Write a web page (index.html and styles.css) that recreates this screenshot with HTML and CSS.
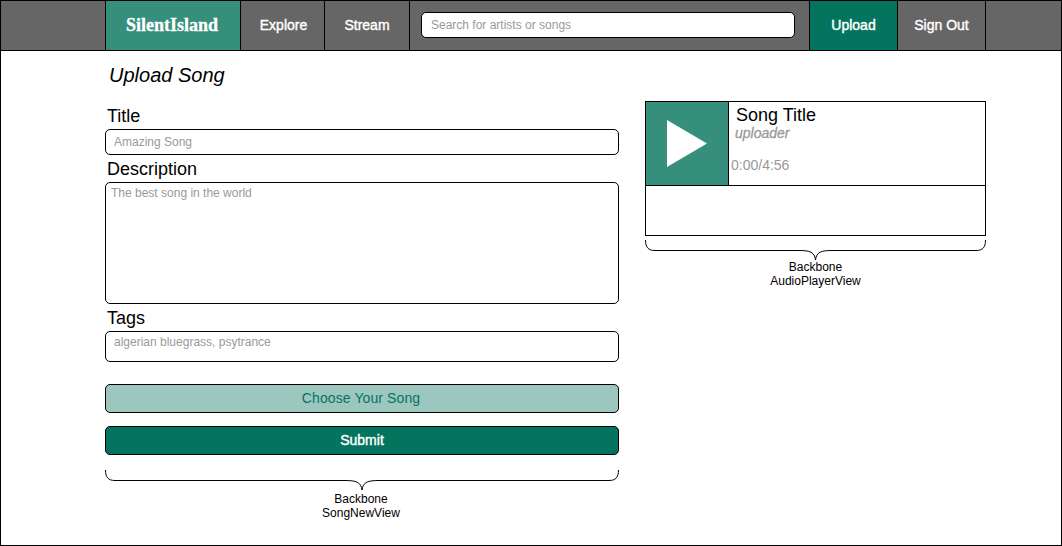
FILE: index.html
```html
<!DOCTYPE html>
<html lang="en">
<head>
    <meta charset="UTF-8">
    <meta name="viewport" content="width=device-width, initial-scale=1.0">
    <title>Upload Song</title>
    <link rel="stylesheet" href="styles.css">
</head>
<body>
    <div class="page">
        <header class="nav">
            <a class="nav-logo">SilentIsland</a>
            <a class="nav-link nav-explore">Explore</a>
            <a class="nav-link nav-stream">Stream</a>
            <div class="nav-search">
                <input class="search-input" type="text" placeholder="Search for artists or songs">
            </div>
            <a class="nav-link nav-upload">Upload</a>
            <a class="nav-link nav-signout">Sign Out</a>
        </header>

        <main class="content">
            <section class="song-new">
                <h1 class="page-title">Upload Song</h1>
                <form class="song-form">
                    <label class="field-label" for="title">Title</label>
                    <input class="field field-title" id="title" type="text" placeholder="Amazing Song">
                    <label class="field-label" for="description">Description</label>
                    <textarea class="field field-description" id="description" placeholder="The best song in the world"></textarea>
                    <label class="field-label" for="tags">Tags</label>
                    <textarea class="field field-tags" id="tags" placeholder="algerian bluegrass, psytrance"></textarea>
                    <button class="btn btn-choose" type="button">Choose Your Song</button>
                    <button class="btn btn-submit" type="button">Submit</button>
                </form>
                <svg class="brace brace-form" width="514" height="20" viewBox="0 0 514 20">
                    <path d="M0.5 0 C0.5 7 3 10.5 10 10.5 L240 10.5 C251 10.5 256 12 257 20 C258 12 263 10.5 274 10.5 L504 10.5 C511 10.5 513.5 7 513.5 0" fill="none" stroke="#000" stroke-width="1"/>
                </svg>
                <p class="note note-form">Backbone<br>SongNewView</p>
            </section>

            <aside class="player-col">
                <div class="player">
                    <div class="player-top">
                        <div class="play-box">
                            <svg width="40" height="47" viewBox="0 0 40 47">
                                <polygon points="0,0 40,23.5 0,47" fill="#fff"/>
                            </svg>
                        </div>
                        <div class="song-info">
                            <div class="song-title">Song Title</div>
                            <div class="song-uploader">uploader</div>
                            <div class="song-time">0:00/4:56</div>
                        </div>
                    </div>
                    <div class="player-bottom"></div>
                </div>
                <svg class="brace brace-player" width="341" height="20" viewBox="0 0 341 20">
                    <path d="M0.5 0 C0.5 7 3 10.5 10 10.5 L154 10.5 C165 10.5 169.5 12 170.5 20 C171.5 12 176 10.5 187 10.5 L331 10.5 C338 10.5 340.5 7 340.5 0" fill="none" stroke="#000" stroke-width="1"/>
                </svg>
                <p class="note">Backbone<br>AudioPlayerView</p>
            </aside>
        </main>
    </div>
</body>
</html>
```

FILE: styles.css
```css
* {
    box-sizing: border-box;
}

body {
    margin: 0;
    font-family: "Liberation Sans", Arial, sans-serif;
    background-color: #fff;
    color: #000;
}

.page {
    width: 1062px;
    height: 546px;
    border: 1px solid #000;
    overflow: hidden;
}

/* top bar */
.nav {
    display: flex;
    height: 50px;
    padding-left: 104px;
    background-color: #666;
    border-bottom: 1px solid #000;
}

.nav-logo,
.nav-link {
    display: flex;
    align-items: center;
    justify-content: center;
    border-left: 1px solid #000;
    color: #fff;
}

.nav-logo {
    width: 135px;
    padding: 0 2px 1px 0;
    background-color: #358f7c;
    font-family: "Liberation Serif", serif;
    font-size: 18px;
    font-weight: bold;
    -webkit-text-stroke: 0.3px #fff;
}

.nav-link {
    padding-bottom: 2px;
    font-size: 14px;
    -webkit-text-stroke: 0.4px #fff;
}

.nav-explore {
    width: 84px;
    padding-left: 2px;
}

.nav-stream {
    width: 85px;
}

.nav-search {
    display: flex;
    align-items: center;
    width: 400px;
    padding: 0 14px 1px 11px;
    border-left: 1px solid #000;
}

.search-input {
    width: 100%;
    height: 26px;
    padding: 0 9px;
    border: 1px solid #000;
    border-radius: 5px;
    font-family: inherit;
    font-size: 12px;
}

.nav-upload {
    width: 88px;
    background-color: #04745f;
}

.nav-signout {
    width: 89px;
    border-right: 1px solid #000;
}

/* main area */
.content {
    display: flex;
    gap: 26px;
    padding-left: 104px;
}

.song-new {
    width: 514px;
}

.page-title {
    margin: 0;
    padding: 12px 0 0 4px;
    height: 51px;
    font-size: 20px;
    font-weight: normal;
    font-style: italic;
    line-height: 25px;
}

.song-form {
    display: flex;
    flex-direction: column;
}

.field-label {
    height: 27px;
    padding: 4px 0 0 2px;
    font-size: 18px;
    line-height: 20px;
}

.field {
    display: block;
    width: 100%;
    border: 1px solid #000;
    border-radius: 5px;
    font-family: inherit;
    font-size: 12px;
    resize: none;
    outline: none;
}

.field::placeholder,
.search-input::placeholder {
    color: #999;
    opacity: 1;
}

.field-title {
    height: 26px;
    padding: 0 8px;
}

.field-description {
    height: 122px;
    padding: 3px 5px;
}

.field-tags {
    height: 31px;
    padding: 3px 8px;
}

.btn {
    display: block;
    width: 100%;
    height: 29px;
    padding-bottom: 3px;
    border: 1px solid #000;
    border-radius: 5px;
    font-family: inherit;
    font-size: 14px;
}

.btn-choose {
    margin-top: 22px;
    padding-right: 8px;
    background-color: #9bc7be;
    color: #04745f;
    letter-spacing: 0.1px;
}

.btn-submit {
    margin-top: 13px;
    background-color: #04745f;
    color: #fff;
    -webkit-text-stroke: 0.4px #fff;
}

.brace {
    display: block;
}

.brace-form {
    margin-top: 15px;
}

.note {
    margin: 0;
    font-size: 12px;
    line-height: 14px;
    text-align: center;
}

.note-form {
    padding: 2px 2px 0 0;
}

/* audio player */
.player-col {
    width: 341px;
    padding-top: 50px;
}

.player {
    height: 135px;
    border: 1px solid #000;
}

.player-top {
    display: flex;
    height: 84px;
    border-bottom: 1px solid #000;
}

.play-box {
    display: flex;
    align-items: center;
    width: 83px;
    padding-left: 21px;
    background-color: #358f7c;
    border-right: 1px solid #000;
}

.song-info {
    padding-left: 2px;
}

.song-title {
    padding: 3px 0 0 5px;
    font-size: 18px;
    line-height: 20px;
}

.song-uploader {
    padding-left: 4px;
    color: #999;
    font-size: 14px;
    font-style: italic;
    line-height: 16px;
    -webkit-text-stroke: 0.3px #999;
}

.song-time {
    margin-top: 16px;
    color: #999;
    font-size: 14px;
    line-height: 16px;
}

.brace-player {
    margin-top: 4px;
}
```
